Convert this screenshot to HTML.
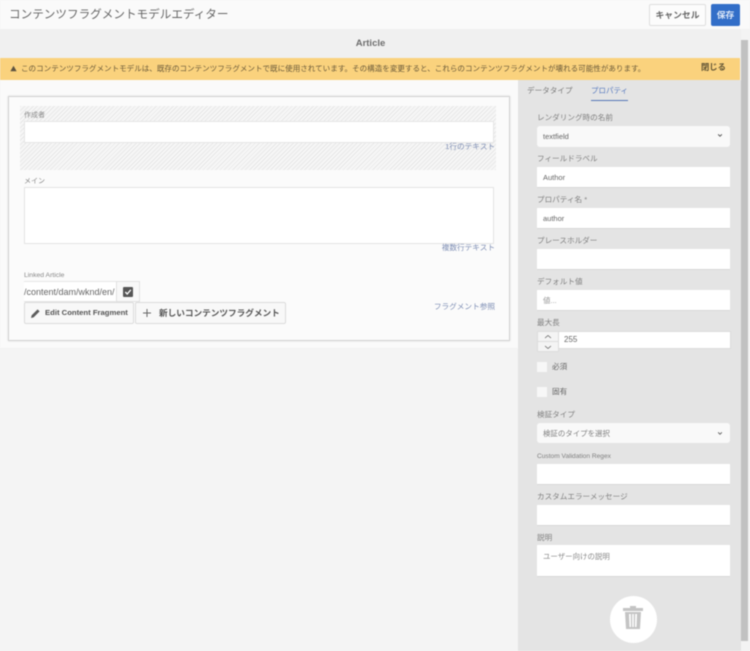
<!DOCTYPE html>
<html lang="ja"><head><meta charset="utf-8"><style>
html,body{margin:0;padding:0;width:750px;height:651px;overflow:hidden;background:#f4f4f4}
body{font-family:"Liberation Sans","Noto Sans CJK JP",sans-serif;color:#707070;position:relative}
#r{position:absolute;left:0;top:0;width:750px;height:651px;filter:blur(.4px)}
#r div,#r span.a{position:absolute;box-sizing:border-box;white-space:nowrap}
.l{font-size:7.6px;line-height:12px;color:#808080;left:537px;margin-top:1px}
.i{left:537px;width:193px;background:#fff;border-bottom:1px solid #d8d8d8;font-size:7.5px;color:#666;padding-left:6px}
.s{left:537px;width:193px;background:#f9f9f9;border-radius:3px;font-size:7.5px;color:#666;padding-left:6px}
.t{font-size:7.65px;line-height:10px;color:#7f8fb5;text-align:right}
.btn{background:#f8f8f8;border:1px solid #dcdcdc;border-radius:2px;color:#555;font-weight:bold;font-size:7.7px;line-height:20px}
</style></head><body><div id="r">
<div style="left:0;top:0;width:750px;height:29px;background:#fafafa"></div>
<div style="left:9px;top:5px;font-size:11.6px;line-height:20px;color:#666">コンテンツフラグメントモデルエディター</div>
<div style="left:649px;top:4px;width:57px;height:22px;background:#fcfcfc;border:1px solid #dedede;border-radius:2px;text-align:center;font-size:8.8px;line-height:20px;font-weight:bold;color:#666">キャンセル</div>
<div style="left:711px;top:4px;width:29px;height:22px;background:#326ec8;border-radius:2px;text-align:center;font-size:8.8px;line-height:22px;font-weight:bold;color:#dfe9f8">保存</div>

<div style="left:0;top:29px;width:741px;height:29px;background:#f0f0f0"></div>
<div style="left:0;top:38px;width:741px;text-align:center;font-size:9.5px;line-height:12px;font-weight:bold;color:#6e6e6e">Article</div>

<div style="left:741px;top:29px;width:9px;height:622px;background:#f3f3f3"></div>
<div style="left:741px;top:40px;width:7px;height:601px;background:#c1c1c1"></div>

<div style="left:0;top:80px;width:518px;height:268px;background:#fafafa"></div>
<div style="left:518px;top:80px;width:223px;height:571px;background:#e4e4e4"></div>

<div style="left:0;top:58px;width:740px;height:22px;background:#fad27d"></div>
<svg style="position:absolute;left:10px;top:65px" width="7" height="7" viewBox="0 0 8 8"><path d="M4 .8 7.6 7.2H.4Z" fill="#5c5341"/></svg>
<div style="left:21px;top:63px;font-size:7.55px;line-height:12px;color:#6a5a3a">このコンテンツフラグメントモデルは、既存のコンテンツフラグメントで既に使用されています。その構造を変更すると、これらのコンテンツフラグメントが壊れる可能性があります。</div>
<div style="left:701px;top:61px;font-size:8.3px;line-height:12px;font-weight:bold;color:#5f5334">閉じる</div>

<div style="left:8px;top:96px;width:502px;height:245px;background:#fbfbfb;border:1px solid #d2d2d2;box-shadow:0 0 2px #ddd"></div>
<div style="left:20px;top:106px;width:476px;height:64px;background:repeating-linear-gradient(135deg,#e8e8e8 0,#e8e8e8 1px,#f6f6f6 1px,#f6f6f6 3px)"></div>
<div style="left:24px;top:111px;font-size:7px;line-height:10px;color:#888">作成者</div>
<div style="left:24px;top:121px;width:470px;height:22px;background:#fff;border:1px solid #e6e6e6"></div>
<div class="t" style="left:395px;width:100px;top:142px">1行のテキスト</div>

<div style="left:24px;top:177px;font-size:7px;line-height:10px;color:#888">メイン</div>
<div style="left:24px;top:187px;width:470px;height:57px;background:#fff;border:1px solid #e4e4e4"></div>
<div class="t" style="left:395px;width:100px;top:243px">複数行テキスト</div>

<div style="left:24px;top:271px;font-size:6.8px;line-height:10px;color:#888">Linked Article</div>
<div style="left:24px;top:281px;width:93px;height:21px;background:#fff;border:1px solid #e6e6e6;border-left:0;font-size:9px;line-height:20px;color:#666">/content/dam/wknd/en/</div>
<div style="left:116px;top:281px;width:24px;height:21px;background:#f8f8f8;border:1px solid #e2e2e2"></div>
<svg style="position:absolute;left:123px;top:287px" width="10" height="10" viewBox="0 0 10 10"><rect width="10" height="10" rx="1" fill="#555"/><path d="M2.3 5 4.2 7 7.8 2.8" stroke="#fff" stroke-width="1.3" fill="none"/></svg>
<div class="btn" style="left:24px;top:302px;width:110px;height:22px;padding-left:20px">Edit Content Fragment</div>
<svg style="position:absolute;left:30px;top:308px" width="11" height="11" viewBox="0 0 11 11"><path d="M1 10 1.6 7.4 7.6 1.4 9.6 3.4 3.6 9.4Z" fill="#5c5c5c"/></svg>
<div class="btn" style="left:135px;top:302px;width:151px;height:22px;padding-left:23px;font-size:8.65px">新しいコンテンツフラグメント</div>
<svg style="position:absolute;left:143px;top:309px" width="8" height="8" viewBox="0 0 8 8"><path d="M4 0V8M0 4H8" stroke="#666" stroke-width="1"/></svg>
<div class="t" style="left:395px;width:100px;top:302px">フラグメント参照</div>

<div style="left:527px;top:85px;font-size:7.6px;line-height:12px;color:#7a7a7a">データタイプ</div>
<div style="left:591px;top:85px;font-size:7.5px;line-height:12px;color:#5a7cc0">プロパティ</div>
<div style="left:591px;top:100px;width:37px;height:1px;background:#5577b8"></div>

<div class="l" style="top:111px">レンダリング時の名前</div>
<div class="s" style="top:126px;height:21px;line-height:21px">textfield</div>
<div class="l" style="top:152px">フィールドラベル</div>
<div class="i" style="top:167px;height:21px;line-height:21px">Author</div>
<div class="l" style="top:193px">プロパティ名 *</div>
<div class="i" style="top:208px;height:21px;line-height:21px">author</div>
<div class="l" style="top:234px">プレースホルダー</div>
<div class="i" style="top:249px;height:21px"></div>
<div class="l" style="top:275px">デフォルト値</div>
<div class="i" style="top:290px;height:21px;line-height:21px;color:#999">値...</div>
<div class="l" style="top:316px">最大長</div>
<div style="left:537px;top:331px;width:22px;height:21px;background:#f4f4f4;border:1px solid #ddd"></div>
<div style="left:537px;top:341px;width:22px;height:1px;background:#ddd"></div>
<svg style="position:absolute;left:544px;top:334px" width="8" height="16" viewBox="0 0 8 16"><path d="M1 4 4 1.5 7 4M1 12 4 14.500 7 12" stroke="#666" stroke-width=".8" fill="none"/></svg>
<div style="left:558px;top:331px;width:173px;height:18px;background:#fff;border:1px solid #dcdcdc;font-size:8px;line-height:16px;padding-left:5px;color:#666">255</div>
<div style="left:537px;top:362px;width:10px;height:10px;background:#f7f7f7"></div>
<div style="left:552px;top:361px;font-size:7.6px;line-height:12px;color:#666">必須</div>
<div style="left:537px;top:387px;width:10px;height:10px;background:#f7f7f7"></div>
<div style="left:552px;top:386px;font-size:7.6px;line-height:12px;color:#666">固有</div>
<div class="l" style="top:408px">検証タイプ</div>
<div class="s" style="top:423px;height:20px;line-height:21px;font-size:7.45px;color:#808080">検証のタイプを選択</div>
<div class="l" style="top:450px;font-size:6.6px">Custom Validation Regex</div>
<div class="i" style="top:464px;height:21px"></div>
<div class="l" style="top:490px">カスタムエラーメッセージ</div>
<div class="i" style="top:505px;height:21px"></div>
<div class="l" style="top:531px">説明</div>
<div class="i" style="top:545px;height:32px;font-size:7.45px;line-height:12px;padding-top:6px;color:#888">ユーザー向けの説明</div>
<svg style="position:absolute;left:717px;top:133px" width="6" height="5" viewBox="0 0 8 6"><path d="M1.500 1.500 4 4 6.500 1.500" stroke="#555" stroke-width="1.200" fill="none"/></svg>
<svg style="position:absolute;left:717px;top:431px" width="6" height="5" viewBox="0 0 8 6"><path d="M1.500 1.500 4 4 6.500 1.500" stroke="#666" stroke-width="1.200" fill="none"/></svg>

<div style="left:610px;top:596px;width:47px;height:47px;border-radius:50%;background:#fff"></div>
<svg style="position:absolute;left:622px;top:605px" width="22" height="25" viewBox="0 0 22 25"><path d="M8 1H14V3H21V6H1V3H8Z" fill="#c4c4c4"/><path d="M3 7H19L18 24H4ZM7 9 7.500 22H9L8.800 9ZM10.200 9V22H11.800V9ZM13.200 9 13 22H14.500L15 9Z" fill="#c4c4c4" fill-rule="evenodd"/></svg>
</div></body></html>
